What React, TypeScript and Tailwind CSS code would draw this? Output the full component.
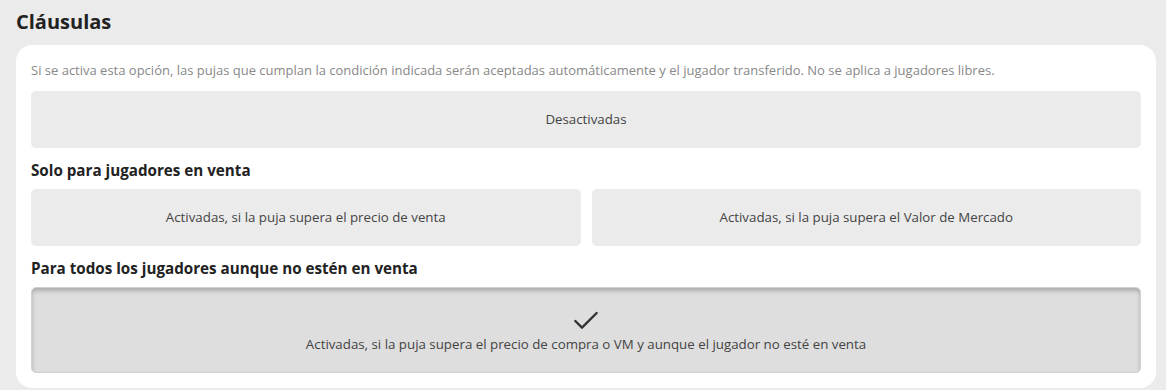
import { Check } from "lucide-react";

const font = { fontFamily: '"Open Sans", "Noto Sans", sans-serif' };

function Option({ label, active }: { label: string; active?: boolean }) {
  if (active) {
    return (
      <div className="flex h-[86px] flex-col items-center justify-center rounded-[5px] border border-[#d2d2d2] bg-[#dedede] pb-[1px] shadow-[inset_0_3px_4px_rgba(0,0,0,0.22)]">
        <Check size={32} strokeWidth={1.8} className="text-[#333]" />
        <span className="-mt-[2px] text-[13.3px] text-[#444]">{label}</span>
      </div>
    );
  }
  return (
    <div className="flex h-[57px] items-center justify-center rounded-[5px] bg-[#ebebeb] text-[13.3px] text-[#444]">
      {label}
    </div>
  );
}

export default function App() {
  return (
    <div className="min-h-[390px] bg-[#ebebeb] pb-[2px] pl-4 pr-[10px] pt-[8px]" style={font}>
      <h2 className="mb-[9px] text-[20px] font-bold leading-[28px] text-[#222]">Cláusulas</h2>
      <div className="rounded-[16px] bg-white px-[15px] pb-[15px] pt-[16px]">
        <p className="mb-[12px] text-[13px] leading-[18px] text-[#888]">
          Si se activa esta opción, las pujas que cumplan la condición indicada serán aceptadas automáticamente y el jugador transferido. No se aplica a jugadores libres.
        </p>
        <Option label="Desactivadas" />
        <h3 className="mb-[9px] mt-[12px] text-[15.2px] font-bold leading-[20px] text-[#222]">
          Solo para jugadores en venta
        </h3>
        <div className="grid grid-cols-2 gap-[11px]">
          <Option label="Activadas, si la puja supera el precio de venta" />
          <Option label="Activadas, si la puja supera el Valor de Mercado" />
        </div>
        <h3 className="mb-[9px] mt-[12px] text-[15.2px] font-bold leading-[20px] text-[#222]">
          Para todos los jugadores aunque no estén en venta
        </h3>
        <Option
          active
          label="Activadas, si la puja supera el precio de compra o VM y aunque el jugador no esté en venta"
        />
      </div>
    </div>
  );
}
